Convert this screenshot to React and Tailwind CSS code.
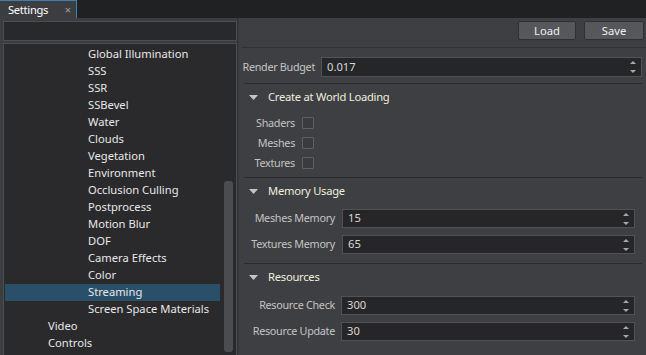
import React from "react";

const tree = [
  ["Global Illumination", 1],
  ["SSS", 1],
  ["SSR", 1],
  ["SSBevel", 1],
  ["Water", 1],
  ["Clouds", 1],
  ["Vegetation", 1],
  ["Environment", 1],
  ["Occlusion Culling", 1],
  ["Postprocess", 1],
  ["Motion Blur", 1],
  ["DOF", 1],
  ["Camera Effects", 1],
  ["Color", 1],
  ["Streaming", 1, true],
  ["Screen Space Materials", 1],
  ["Video", 0],
  ["Controls", 0],
];

function Spin() {
  return (
    <svg width="8" height="14" viewBox="0 0 8 14" className="shrink-0">
      <path d="M1 4 L4 1 L7 4 Z" fill="#a8a8a8" />
      <path d="M1 10 L4 13 L7 10 Z" fill="#a8a8a8" />
    </svg>
  );
}

function NumInput({ value, h = "h-[19px]" }) {
  return (
    <div className={`flex-1 ${h} bg-[#262628] border border-[#515256] flex items-center pl-[5px] pr-[4px] text-[11.2px] text-[#d8d8d8]`}>
      <span className="flex-1">{value}</span>
      <Spin />
    </div>
  );
}

function Header({ title }) {
  return (
    <div className="h-[26px] flex items-center">
      <svg width="9" height="5" viewBox="0 0 9 5" className="ml-[6px] mr-[10px]">
        <path d="M0 0 L9 0 L4.5 5 Z" fill="#c4c4c4" />
      </svg>
      <span className="text-[11.2px] tracking-[-0.25px] text-[#eeeedd]">{title}</span>
    </div>
  );
}

function Sep() {
  return <div className="h-px bg-[#2a2b2e] ml-px" />;
}

function Check() {
  return <div className="w-[12px] h-[12px] border border-[#5e5f63] bg-[#3a3b3e] rounded-[1px] shrink-0" />;
}

const label = "shrink-0 flex justify-end text-[10.8px] tracking-[-0.3px] text-[#c4c4c4] whitespace-nowrap";

export default function App() {
  return (
    <div className="w-[646px] h-[355px] bg-[#202123] flex flex-col font-['Noto_Sans',sans-serif] overflow-hidden select-none">
      <div className="h-[18px] flex shrink-0">
        <div className="w-[77px] h-[18px] bg-[#3c3d40] border-t border-r border-[#3d7eb3] flex items-center pl-[8px] pr-[5px]">
          <span className="text-[11.2px] tracking-[-0.3px] text-white flex-1 leading-none">Settings</span>
          <span className="text-[11px] text-[#a0a0a0] leading-none">×</span>
        </div>
      </div>
      <div className="flex flex-1 min-h-0">
        <div className="w-[237px] bg-[#3c3d40] flex flex-col pl-[3px] pt-[3px] pb-[2px] gap-[2px]">
          <div className="h-[20px] bg-[#28292b] border border-[#4c4d51] shrink-0" />
          <div className="flex-1 bg-[#2a2a2c] border border-[#4c4d51] flex pt-[2px] pb-[3px] pl-px">
            <div className="flex-1 flex flex-col">
              {tree.map(([name, lvl, sel]) => (
                <div
                  key={name}
                  className={`h-[17px] flex items-center text-[11.2px] text-[#e8e8e8] whitespace-nowrap ${lvl ? "pl-[83px]" : "pl-[43px]"} ${sel ? "bg-[#2a5069]" : ""}`}
                >
                  {name}
                </div>
              ))}
            </div>
            <div className="w-[16px] flex flex-col justify-end items-center pl-[3px] pr-[3px] shrink-0">
              <div className="w-[9px] h-[171px] bg-[#4b4c50] rounded-[3px]" />
            </div>
          </div>
        </div>
        <div className="w-px bg-[#333437]" />
        <div className="flex-1 bg-[#3e3f42] flex flex-col border-l border-[#37383b]">
          <div className="h-[29px] flex justify-end items-start pt-[3px] pr-[2px] gap-[8px] shrink-0">
            <button className="w-[58px] h-[19px] bg-[#55575b] border border-[#2f3033] rounded-[2px] text-[11.2px] text-[#f0f0f0] leading-none">Load</button>
            <button className="w-[60px] h-[19px] bg-[#55575b] border border-[#2f3033] rounded-[2px] text-[11.2px] text-[#f0f0f0] leading-none">Save</button>
          </div>
          <div className="h-px bg-[#323336] ml-[3px]" />
          <div className="flex flex-col pl-[4px] pr-[4px]">
            <div className="flex items-center mt-[9px] gap-[6px]">
              <span className={`w-[72px] ${label}`}>Render Budget</span>
              <NumInput value="0.017" h="h-[20px]" />
            </div>
            <div className="h-[6px]" />
            <Sep />
            <Header title="Create at World Loading" />
            <div className="flex flex-col pt-[3px] pb-[4px] pl-[9px]">
              {["Shaders", "Meshes", "Textures"].map((l) => (
                <div key={l} className="h-[20px] flex items-center gap-[7px]">
                  <span className={`w-[43px] ${label}`}>{l}</span>
                  <Check />
                </div>
              ))}
            </div>
            <Sep />
            <Header title="Memory Usage" />
            <div className="flex flex-col pt-[5px] pb-[9px] pl-[9px] pr-[7px] gap-[7px]">
              {[["Meshes Memory", "15"], ["Textures Memory", "65"]].map(([l, v]) => (
                <div key={l} className="flex items-center gap-[7px]">
                  <span className={`w-[83px] ${label}`}>{l}</span>
                  <NumInput value={v} />
                </div>
              ))}
            </div>
            <Sep />
            <Header title="Resources" />
            <div className="flex flex-col pt-[6px] pl-[9px] pr-[7px] gap-[7px]">
              {[["Resource Check", "300"], ["Resource Update", "30"]].map(([l, v]) => (
                <div key={l} className="flex items-center gap-[6px]">
                  <span className={`w-[83px] ${label}`}>{l}</span>
                  <NumInput value={v} />
                </div>
              ))}
            </div>
          </div>
        </div>
      </div>
    </div>
  );
}
